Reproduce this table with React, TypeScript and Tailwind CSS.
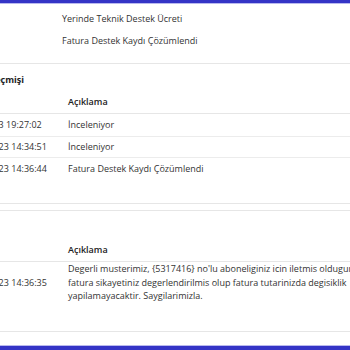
import React from "react";

type Row = { date: string; text: string };

function Card({
  title,
  rows,
  multi,
  titleH,
}: {
  title: string;
  rows: Row[];
  multi?: boolean;
  titleH: "h-[23px]" | "h-[24px]";
}) {
  const rowH = ["h-[23px]", "h-[21px]", "h-[22px]"];
  return (
    <div className="border-t border-b border-[#e6e6e6] pb-[23px]">
      <div className={`pl-[15px] pt-[9px] ${titleH} font-bold leading-[13.5px] text-[#222]`}>{title}</div>
      <div className="flex h-[27px] items-center pt-[3px] border-b border-[#e6e6e6] font-semibold text-[#222]">
        <div className="w-[128px] pl-[23px]">Tarih</div>
        <div className="flex-1">Açıklama</div>
      </div>
      {rows.map((r, i) =>
        multi ? (
          <div key={i} className="flex items-center pb-[5px]">
            <div className="w-[128px] pl-[23px] shrink-0">{r.date}</div>
            <div className="w-[300px] shrink-0">{r.text}</div>
          </div>
        ) : (
          <div
            key={i}
            className={`flex ${rowH[i]} items-center ${i < rows.length - 1 ? "border-b border-[#ececec]" : ""}`}
          >
            <div className="w-[128px] pl-[23px] shrink-0">{r.date}</div>
            <div className="flex-1 whitespace-nowrap">{r.text}</div>
          </div>
        )
      )}
    </div>
  );
}

export default function App() {
  return (
    <div
      className="relative w-[350px] h-[350px] overflow-hidden bg-white text-[9px] leading-[13.5px] text-[#333]"
      style={{ fontFamily: "'Open Sans', 'Noto Sans', sans-serif" }}
    >
      <div className="h-[3px] bg-[#3434c6] border-b border-[#b9b9ee] box-content" />
      <div className="ml-[-60px] w-[480px]">
        <div className="pt-[4px] h-[59px]">
          <div className="flex h-[22px] items-center pl-[122px]">Yerinde Teknik Destek Ücreti</div>
          <div className="flex h-[22px] items-center pl-[122px]">Fatura Destek Kaydı Çözümlendi</div>
        </div>
        <Card
          title="Durum Geçmişi"
          titleH="h-[23px]"
          rows={[
            { date: "8.12.2023 19:27:02", text: "İnceleniyor" },
            { date: "14.12.2023 14:34:51", text: "İnceleniyor" },
            { date: "14.12.2023 14:36:44", text: "Fatura Destek Kaydı Çözümlendi" },
          ]}
        />
        <div className="h-[6px]" />
        <Card
          title="Yanıtlar"
          titleH="h-[24px]"
          multi
          rows={[
            {
              date: "14.12.2023 14:36:35",
              text: "Degerli musterimiz, {5317416} no'lu aboneliginiz icin iletmis oldugunuz fatura sikayetiniz degerlendirilmis olup fatura tutarinizda degisiklik yapilamayacaktir. Saygilarimizla.",
            },
          ]}
        />
      </div>
      <div className="absolute left-0 right-0 bottom-0 h-[5px] bg-[#3434c6] border-t border-[#b9b9ee]" />
    </div>
  );
}
